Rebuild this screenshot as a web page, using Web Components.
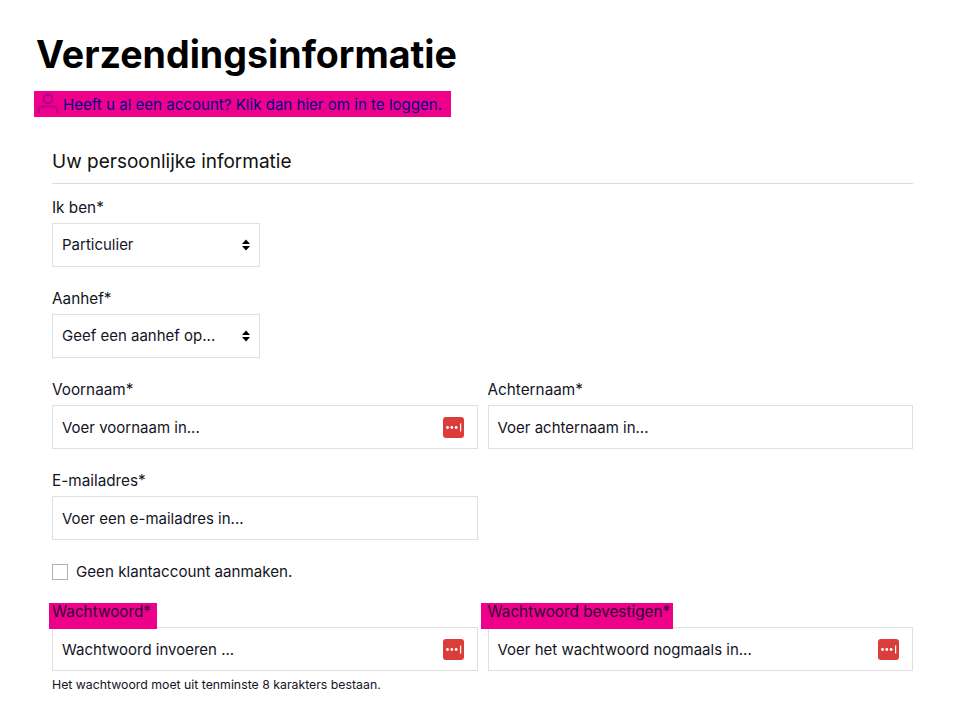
<!DOCTYPE html>
<html lang="nl">
<head>
<meta charset="utf-8">
<title>Verzendingsinformatie</title>
<style>
  html, body { margin: 0; background: #fff; }
  body { font-family: "Inter", "Liberation Sans", sans-serif; color: #14141f; }
</style>
</head>
<body>
<checkout-page>
  <h-title slot="title">Verzendingsinformatie</h-title>
  <login-notice slot="notice">Heeft u al een account? Klik dan hier om in te loggen.</login-notice>
  <form-section heading="Uw persoonlijke informatie">
    <form-row>
      <form-field label="Ik ben*" kind="select" narrow value="Particulier"></form-field>
    </form-row>
    <form-row>
      <form-field label="Aanhef*" kind="select" narrow value="Geef een aanhef op..."></form-field>
    </form-row>
    <form-row cols="2">
      <form-field label="Voornaam*" value="Voer voornaam in..." keeper></form-field>
      <form-field label="Achternaam*" value="Voer achternaam in..."></form-field>
    </form-row>
    <form-row cols="2">
      <form-field label="E-mailadres*" value="Voer een e-mailadres in..."></form-field>
    </form-row>
    <check-row>Geen klantaccount aanmaken.</check-row>
    <form-row cols="2">
      <form-field label="Wachtwoord*" value="Wachtwoord invoeren ..." keeper marked hint="Het wachtwoord moet uit tenminste 8 karakters bestaan."></form-field>
      <form-field label="Wachtwoord bevestigen*" value="Voer het wachtwoord nogmaals in..." keeper marked="wide"></form-field>
    </form-row>
  </form-section>
</checkout-page>

<script>
const PINK = "#ee008b";

class CheckoutPage extends HTMLElement {
  constructor() {
    super();
    this.attachShadow({ mode: "open" });
    this.shadowRoot.innerHTML = `
      <style>
        :host { display: block; padding: 31px 41px 0 36px; }
        .section { padding: 32px 0 0 16px; }
      </style>
      <slot name="title"></slot>
      <slot name="notice"></slot>
      <div class="section"><slot></slot></div>
    `;
  }
}

class HTitle extends HTMLElement {
  constructor() {
    super();
    this.attachShadow({ mode: "open" });
    this.shadowRoot.innerHTML = `
      <style>
        :host { display: block; font-size: 37.6px; line-height: 48px; font-weight: 700; color: #000; }
      </style>
      <slot></slot>
    `;
  }
}

class LoginNotice extends HTMLElement {
  constructor() {
    super();
    this.attachShadow({ mode: "open" });
    this.shadowRoot.innerHTML = `
      <style>
        :host {
          display: flex; width: fit-content; align-items: center; gap: 5px;
          height: 26px; margin: 12px 0 0 -2px; padding: 0 9px 0 4px;
          background: ${PINK}; color: #00008b; font-size: 15.08px;
        }
        svg { width: 20px; height: 20px; flex: none; }
      </style>
      <svg viewBox="0 0 20 20" fill="none" stroke="#a0009a" stroke-width="1.6">
        <circle cx="10" cy="5" r="4.4"/>
        <path d="M.8 19v-2.5a4 4 0 0 1 4-4h10.4a4 4 0 0 1 4 4V19"/>
      </svg>
      <span><slot></slot></span>
    `;
  }
}

class FormSection extends HTMLElement {
  constructor() {
    super();
    this.attachShadow({ mode: "open" });
    this.shadowRoot.innerHTML = `
      <style>
        :host { display: block; }
        h2 {
          margin: 0 0 12px; padding-bottom: 10px; height: 24px; line-height: 26px;
          font-size: 19px; font-weight: 400; color: #111;
          border-bottom: 1px solid #dcdcdc;
        }
        .rows { display: flex; flex-direction: column; gap: 20px; }
      </style>
      <h2>${this.getAttribute("heading")}</h2>
      <div class="rows"><slot></slot></div>
    `;
  }
}

class FormRow extends HTMLElement {
  constructor() {
    super();
    this.attachShadow({ mode: "open" });
    this.shadowRoot.innerHTML = `
      <style>
        :host { display: grid; grid-template-columns: 1fr; column-gap: 10px; }
        :host([cols="2"]) { grid-template-columns: 1fr 1fr; }
      </style>
      <slot></slot>
    `;
  }
}

class FormField extends HTMLElement {
  constructor() {
    super();
    this.attachShadow({ mode: "open" });
    const label = this.getAttribute("label");
    const value = this.getAttribute("value");
    const hint = this.getAttribute("hint");
    const isSelect = this.getAttribute("kind") === "select";
    const keeper = `
      <svg class="keeper" viewBox="0 0 21 21">
        <rect width="21" height="21" rx="3" fill="#db3e3a"/>
        <circle cx="4.5" cy="10.5" r="1.4" fill="#fff"/>
        <circle cx="8.8" cy="10.5" r="1.4" fill="#fff"/>
        <circle cx="13.1" cy="10.5" r="1.4" fill="#fff"/>
        <rect x="17" y="6.5" width="1.2" height="8" fill="#fff"/>
      </svg>`;
    const arrows = `
      <svg class="arrows" viewBox="0 0 8 12" fill="#000">
        <path d="M4 .5 8 5H0zM4 11.5 0 7h8z"/>
      </svg>`;
    this.shadowRoot.innerHTML = `
      <style>
        :host { display: block; min-width: 0; font-size: 15px; color: #14141f; }
        :host([narrow]) { width: 208px; }
        .label { display: block; width: fit-content; height: 24px; line-height: 24px; font-size: 15.3px; margin-bottom: 3px; position: relative; z-index: 1; }
        :host([marked]) .label {
          background: ${PINK}; color: #30003a;
          margin: 0 0 -2px -3px; padding: 0 6px 0 3px; height: 26px; line-height: 17px;
        }
        :host([marked="wide"]) .label { margin-left: -7px; padding: 0 3px 0 7px; }
        .box {
          box-sizing: border-box; height: 44px; display: flex; align-items: center;
          justify-content: space-between; padding: 0 13px 0 9px;
          border: 1px solid #dfdfdf; background: #fff;
        }
        :host([kind="select"]) .box span { position: relative; top: -1px; }
        .keeper { width: 21px; height: 21px; flex: none; }
        .arrows { width: 8px; height: 12px; flex: none; margin-right: -4px; }
        .hint { margin-top: 6px; font-size: 12.3px; line-height: 16px; }
      </style>
      <span class="label">${label}</span>
      <div class="box">
        <span>${value}</span>
        ${isSelect ? arrows : this.hasAttribute("keeper") ? keeper : ""}
      </div>
      ${hint ? `<div class="hint">${hint}</div>` : ""}
    `;
  }
}

class CheckRow extends HTMLElement {
  constructor() {
    super();
    this.attachShadow({ mode: "open" });
    this.shadowRoot.innerHTML = `
      <style>
        :host { display: flex; align-items: center; gap: 8px; height: 24px; margin: 0 0 -1px; font-size: 15.15px; line-height: 22px; }
        i { box-sizing: border-box; width: 16px; height: 16px; border: 1px solid #a9b1b8; background: #fff; }
      </style>
      <i></i><span><slot></slot></span>
    `;
  }
}

customElements.define("checkout-page", CheckoutPage);
customElements.define("h-title", HTitle);
customElements.define("login-notice", LoginNotice);
customElements.define("form-section", FormSection);
customElements.define("form-row", FormRow);
customElements.define("form-field", FormField);
customElements.define("check-row", CheckRow);
</script>
</body>
</html>
